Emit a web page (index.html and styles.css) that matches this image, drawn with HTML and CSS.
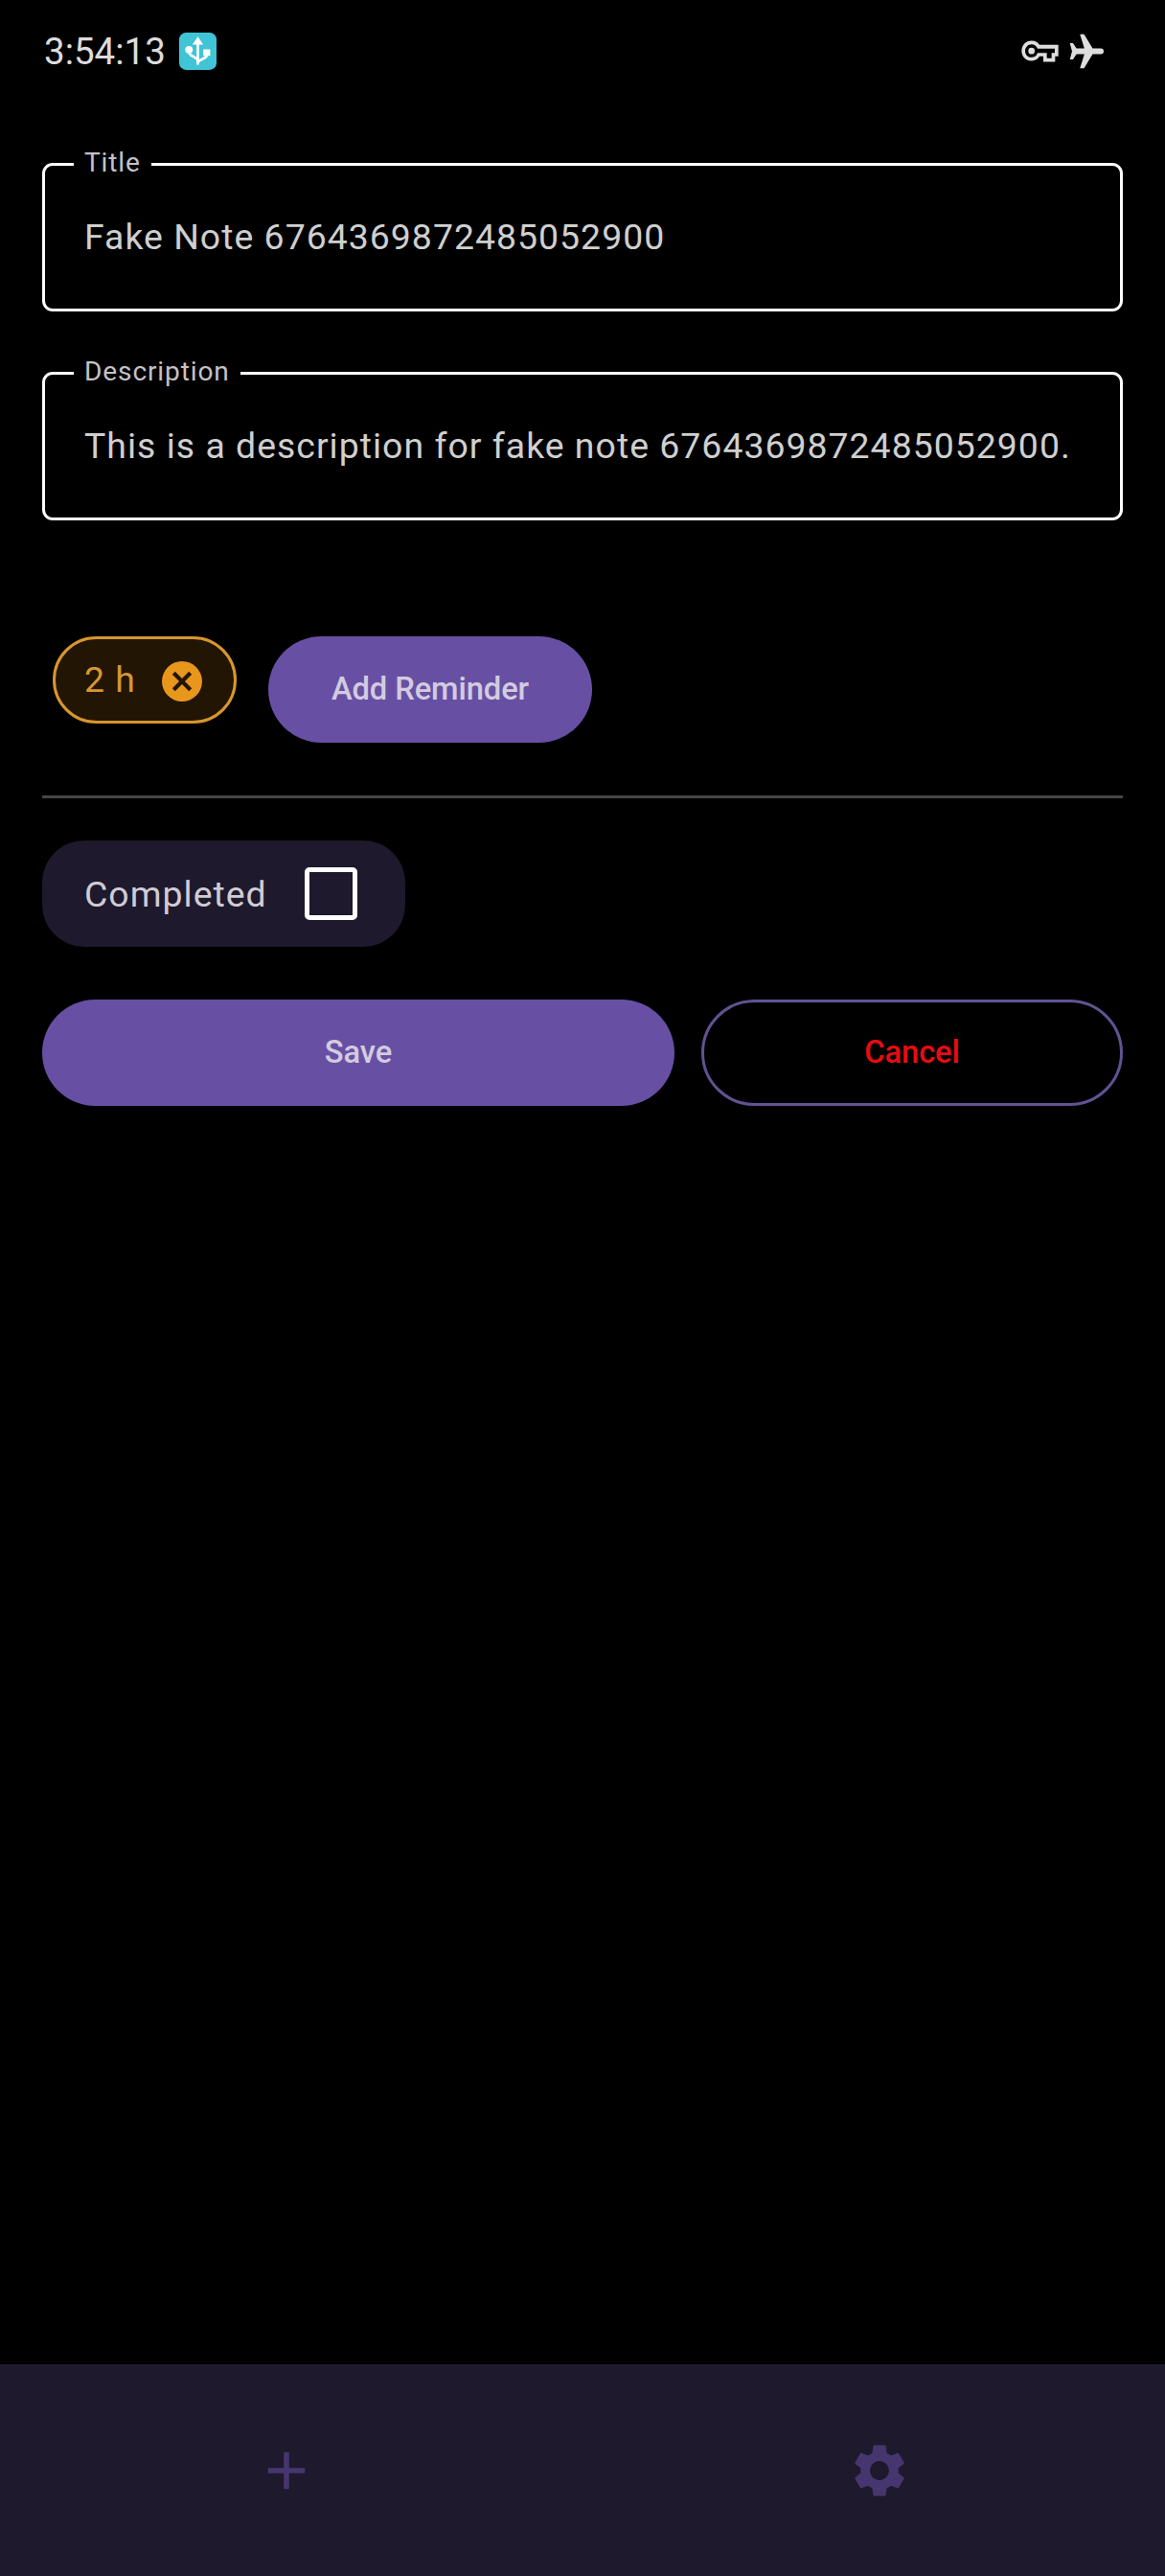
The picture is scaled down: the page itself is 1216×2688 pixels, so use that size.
FILE: index.html
```html
<!DOCTYPE html>
<html lang="en">
<head>
<meta charset="utf-8">
<title>Edit note</title>
<link rel="stylesheet" href="styles.css">
</head>
<body>
<div class="screen">
  <header class="status-bar">
    <span class="clock">3:54:13</span>
    <svg class="usb" viewBox="0 0 118 118">
      <rect width="118" height="118" rx="22" fill="#41c4d6"/>
      <g fill="none" stroke="#fff" stroke-width="8" stroke-linecap="round">
        <path d="M59 30V98"/>
        <path d="M32 56v6q0 8 10 12l17 11"/>
        <path d="M87 63v8q0 7-9 10l-19 11"/>
      </g>
      <path d="M59 13l17 25H42z" fill="#fff"/>
      <circle cx="31" cy="54" r="12" fill="#fff"/>
      <rect x="76" y="53" width="22" height="20" rx="2" fill="#fff"/>
    </svg>
    <div class="status-icons">
      <svg class="key" viewBox="79 68 117 68">
        <path fill-rule="evenodd" d="M111 69C124 69 132 75 136 82H195V118H185V135H148V118H136C132 125 124 132 111 132C93 132 80 118 80 101C80 83 93 69 111 69ZM111 80C99 80 91 90 91 101C91 112 99 121 111 121C120 121 127 116 130 107H159V124H174V107H184V94H130C127 85 120 80 111 80Z"/>
        <circle cx="111" cy="101" r="10"/>
      </svg>
      <svg class="plane" viewBox="230 45 110 112">
        <path d="M329 92a9 9 0 0 1 0 18H303L276 155H263L277 110H252L241 127H231L238 101L231 75H241L252 92H277L263 47H276L303 92Z"/>
      </svg>
    </div>
  </header>

  <main class="form">
    <fieldset class="field">
      <legend>Title</legend>
      <div class="value">Fake Note 6764369872485052900</div>
    </fieldset>
    <fieldset class="field">
      <legend>Description</legend>
      <div class="value">This is a description for fake note 6764369872485052900.</div>
    </fieldset>

    <section class="reminders">
      <div class="chip">
        <span>2 h</span>
        <svg viewBox="0 0 42 42">
          <circle cx="21" cy="21" r="21" fill="#e8961c"/>
          <path d="M12.300 12.300l17.400 17.400M29.700 12.300L12.300 29.700" stroke="#221503" stroke-width="4.200"/>
        </svg>
      </div>
      <button class="button add">Add Reminder</button>
    </section>

    <hr class="divider">

    <label class="completed">
      <span>Completed</span>
      <span class="checkbox"></span>
    </label>

    <div class="actions">
      <button class="button save">Save</button>
      <button class="button cancel">Cancel</button>
    </div>
  </main>

  <nav class="bottom-nav">
    <a><svg viewBox="0 0 24 24"><path d="M19 13h-6v6h-2v-6H5v-2h6V5h2v6h6z"/></svg></a>
    <a><svg viewBox="0 0 24 24"><path d="M19.140 12.940c.04-.3.060-.61.060-.94 0-.32-.02-.64-.07-.94l2.030-1.580c.18-.14.230-.41.120-.61l-1.920-3.320c-.12-.22-.37-.29-.59-.22l-2.390.96c-.5-.38-1.030-.7-1.620-.94l-.36-2.540c-.04-.24-.24-.41-.48-.41h-3.840c-.24 0-.43.170-.47.410l-.36 2.540c-.59.240-1.130.570-1.620.940l-2.390-.96c-.22-.08-.47 0-.59.220L2.740 8.870c-.12.210-.08.470.120.610l2.030 1.580c-.05.300-.09.630-.09.940s.02.640.070.940l-2.030 1.580c-.18.140-.23.410-.12.610l1.920 3.320c.12.220.370.290.590.220l2.390-.96c.5.380 1.030.7 1.620.940l.36 2.540c.05.240.240.410.480.410h3.840c.24 0 .44-.17.470-.41l.36-2.540c.59-.24 1.130-.56 1.620-.94l2.390.96c.22.080.470 0 .59-.22l1.920-3.320c.12-.22.070-.47-.12-.61l-2.010-1.580zM12 15.600c-1.980 0-3.600-1.620-3.600-3.600s1.620-3.600 3.600-3.600 3.600 1.620 3.600 3.600-1.620 3.600-3.600 3.600z"/></svg></a>
  </nav>
</div>
</body>
</html>
```
FILE: styles.css
```css
* { box-sizing: border-box; }

body {
  margin: 0;
  background: #000;
  color: #cfcfcf;
  font-family: Roboto, "Liberation Sans", sans-serif;
  font-size: 37.4px;
  letter-spacing: 1.02px;
}

svg { display: block; flex: none; }

.screen {
  display: flex;
  flex-direction: column;
  height: 2688px;
}

.status-bar {
  display: flex;
  align-items: center;
  height: 107px;
  padding: 0 63px 0 46px;
}

.clock {
  width: 141px;
  font-size: 38.5px;
  line-height: 44px;
  letter-spacing: 0;
  color: #dcdcdc;
}

.usb { width: 39px; height: 39px; }

.status-icons {
  display: flex;
  align-items: center;
  gap: 11px;
  margin-left: auto;
  fill: #dedede;
}

.key { width: 39px; height: 23px; }
.plane { width: 37px; height: 37px; }

.form {
  flex: 1;
  display: flex;
  flex-direction: column;
  padding: 46px 44px 0;
}

.field {
  height: 172px;
  min-width: 0;
  margin: 0 0 46px;
  padding: 0 41px 0 30px;
  border: 3px solid #fff;
  border-radius: 11px;
}

.field legend {
  height: 37px;
  padding: 0 11px;
  font-size: 28.05px;
  line-height: 34px;
  letter-spacing: 0.88px;
  color: #c4c2c8;
}

.field .value {
  padding: 35px 0 0 11px;
  line-height: 44px;
  white-space: nowrap;
}

.reminders {
  display: flex;
  align-items: flex-start;
  gap: 33px;
  height: 111px;
  margin: 75px 0 55px 11px;
}

.chip {
  display: flex;
  align-items: center;
  justify-content: space-between;
  width: 192px;
  height: 91px;
  padding: 0 33px 0 30px;
  border: 3px solid #d8962f;
  border-radius: 46px;
  background: #221503;
  color: #d8962f;
}

.chip span { padding-bottom: 2px; }

.chip svg { width: 42px; height: 42px; margin-top: 3px; }

.button {
  height: 111px;
  padding: 0 0 2px;
  border: 0;
  border-radius: 56px;
  background: #6750a4;
  color: #d3cbdf;
  font: 500 32.725px/40px Roboto, "Liberation Sans", sans-serif;
  letter-spacing: -0.1px;
}

.add { width: 338px; }

.divider {
  width: 100%;
  height: 3px;
  margin: 0 0 44px;
  border: 0;
  background: #464646;
}

.completed {
  display: flex;
  align-items: center;
  justify-content: space-between;
  width: 379px;
  height: 111px;
  padding: 0 50px 0 44px;
  border-radius: 44px;
  background: #1e192d;
  color: #d0ccd4;
}

.checkbox {
  width: 55px;
  height: 55px;
  border: 5px solid #fff;
  border-radius: 5px;
}

.actions {
  display: flex;
  gap: 28px;
  margin-top: 55px;
}

.save { width: 660px; }

.cancel {
  flex: 1;
  border: 3px solid #625292;
  background: transparent;
  color: #e80c10;
}

.bottom-nav {
  display: grid;
  grid-template-columns: 1fr 1fr;
  gap: 22px;
  height: 221px;
  background: #1e192d;
}

.bottom-nav a {
  display: flex;
  align-items: center;
  justify-content: center;
}

.bottom-nav svg { width: 66px; height: 66px; fill: #46366f; }
```
